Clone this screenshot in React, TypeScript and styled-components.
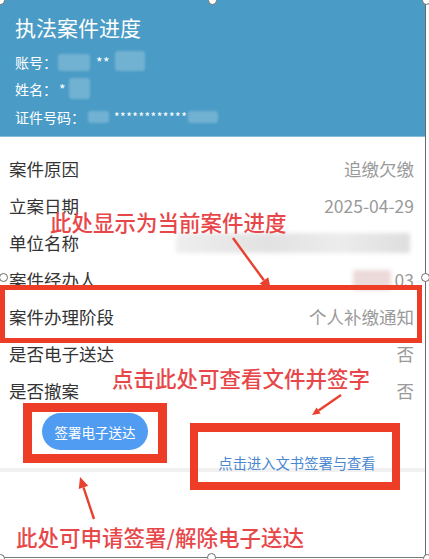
import React from "react";
import styled, { createGlobalStyle } from "styled-components";

//colors
const headerBlue = "#4a9cc6";
const markRed = "#ee3d26";
const noteRed = "#e8474a";

const GlobalStyle = createGlobalStyle`
  html, body {
    margin: 0;
    padding: 0;
    background: #ffffff;
  }
  body {
    font-family: "Noto Sans CJK SC", "Noto Sans", sans-serif;
  }
`;

//styled-components
const Canvas = styled.div`
  position: relative;
  width: 429px;
  height: 559px;
  overflow: hidden;
  background: #ffffff;
`;

const Frame = styled.div`
  width: 426px;
  height: 558px;
  box-sizing: border-box;
  border-right: 1px solid #6a6a6a;
  border-bottom: 1px solid #7a7a7a;
  display: flex;
  flex-direction: column;
`;

const Header = styled.header`
  height: 137px;
  box-sizing: border-box;
  padding: 12px 15px 0;
  background: ${headerBlue};
  border-bottom: 1px solid #86bcd8;
  color: #ffffff;
`;

const Title = styled.h1`
  margin: 0 0 6px;
  font-size: 21px;
  line-height: 30px;
  font-weight: 400;
`;

const InfoLine = styled.div`
  display: flex;
  align-items: center;
  height: 27.5px;
  font-size: 14px;
`;

const Mask = styled.span<{ $w: number; $h: number; $gap?: number; $dy?: number }>`
  display: inline-block;
  width: ${(p) => p.$w}px;
  height: ${(p) => p.$h}px;
  margin-left: ${(p) => p.$gap ?? 0}px;
  transform: translateY(${(p) => p.$dy ?? 0}px);
  background: rgba(255, 255, 255, 0.22);
  border-radius: 3px;
  filter: blur(1px);
`;

const Stars = styled.span<{ $gap?: number; $size?: number }>`
  margin-left: ${(p) => p.$gap ?? 0}px;
  font-size: ${(p) => p.$size ?? 12}px;
  letter-spacing: 0.5px;
`;

const List = styled.div`
  padding-top: 13px;
  display: flex;
  flex-direction: column;
`;

const Row = styled.div<{ $marked?: boolean }>`
  position: relative;
  height: 37px;
  padding: 0 11px 0 9px;
  display: flex;
  align-items: center;
  justify-content: space-between;
  font-size: 17.5px;

  ${(p) =>
    p.$marked &&
    `
    &::after {
      content: "";
      position: absolute;
      top: -13px;
      bottom: -8px;
      left: 0;
      right: 3px;
      border: 5px solid ${markRed};
      pointer-events: none;
    }
  `}
`;

const Label = styled.span`
  color: #333333;
`;

const Value = styled.span`
  display: flex;
  align-items: center;
  color: #9a9a9a;
`;

const GrayBlur = styled.span<{ $w: number; $tint?: string }>`
  display: inline-block;
  width: ${(p) => p.$w}px;
  height: 20px;
  margin-right: 4px;
  background: ${(p) => p.$tint ?? "linear-gradient(90deg, #eeeeee, #e2e2e2 40%, #ececec 70%, #dedede)"};
  filter: blur(2px);
`;

const ActionArea = styled.div`
  position: relative;
  margin-top: -6px;
  padding-left: 23px;
  display: flex;
  align-items: flex-start;

  &::before {
    content: "";
    position: absolute;
    left: 0;
    right: 0;
    top: 65px;
    height: 4px;
    background: #f1f1f1;
  }
`;

const ButtonBox = styled.div`
  position: relative;
  width: 144px;
  height: 60px;
  box-sizing: border-box;
  border: 9px solid ${markRed};
  display: flex;
  align-items: center;
  justify-content: center;
`;

const SignButton = styled.button`
  width: 106px;
  height: 37px;
  margin-top: -3px;
  border: none;
  border-radius: 19px;
  background: #4f9cf2;
  color: #ffffff;
  font-family: inherit;
  font-size: 13.5px;
  cursor: pointer;
`;

const LinkBox = styled.div`
  position: relative;
  width: 210px;
  height: 67px;
  margin: 20px 0 0 23px;
  box-sizing: border-box;
  border: 8px solid ${markRed};
  border-top-width: 9px;
  display: flex;
  align-items: flex-end;
  justify-content: center;
  padding: 0 0 9px 4px;
`;

const LinkText = styled.span`
  color: #4a88d2;
  font-size: 14.3px;
  line-height: 20px;
`;

const BottomNote = styled.div`
  margin-top: 34px;
  padding-left: 16px;
  color: ${noteRed};
  font-size: 21.5px;
  line-height: 26px;
  font-weight: 500;
`;

const FloatNote = styled.div<{ $x: number; $y: number }>`
  position: absolute;
  left: ${(p) => p.$x}px;
  top: ${(p) => p.$y}px;
  color: ${noteRed};
  font-size: 21.5px;
  line-height: 24px;
  font-weight: 500;
  white-space: nowrap;
`;

const ArrowLayer = styled.svg`
  position: absolute;
  left: 0;
  top: 0;
  pointer-events: none;
`;

const Handle = styled.span<{ $x: number; $y: number }>`
  position: absolute;
  left: ${(p) => p.$x - 4}px;
  top: ${(p) => p.$y - 4}px;
  width: 7px;
  height: 7px;
  border-radius: 50%;
  background: #ffffff;
  border: 1px solid #6c6c6c;
`;

const rows = [
  { label: "案件原因", value: "追缴欠缴" },
  { label: "立案日期", value: "2025-04-29" },
  { label: "单位名称", value: "unit" },
  { label: "案件经办人", value: "agent" },
  { label: "案件办理阶段", value: "个人补缴通知", marked: true },
  { label: "是否电子送达", value: "否" },
  { label: "是否撤案", value: "否" },
];

const handles = [
  [0, 0],
  [212, 0],
  [426, 0],
  [3, 277],
  [425, 277],
  [0, 558],
  [211, 557],
  [427, 558],
];

function RowValue({ value }: { value: string }) {
  if (value === "unit") {
    return (
      <Value>
        <GrayBlur $w={234} />
      </Value>
    );
  }
  if (value === "agent") {
    return (
      <Value>
        <GrayBlur $w={38} $tint="#ecd9d9" />
        03
      </Value>
    );
  }
  return <Value>{value}</Value>;
}

function Arrow({ x1, y1, x2, y2, head }: { x1: number; y1: number; x2: number; y2: number; head: number }) {
  const a = Math.atan2(y2 - y1, x2 - x1);
  const bx = x2 - Math.cos(a) * head;
  const by = y2 - Math.sin(a) * head;
  const w = head * 0.45;
  const px = Math.sin(a) * w;
  const py = -Math.cos(a) * w;
  return (
    <g>
      <line x1={x1} y1={y1} x2={bx} y2={by} stroke="#e8412f" strokeWidth={2.4} />
      <polygon points={`${x2},${y2} ${bx + px},${by + py} ${bx - px},${by - py}`} fill="#e8412f" />
    </g>
  );
}

export default function App() {
  return (
    <>
      <GlobalStyle />
      <Canvas>
        <Frame>
          {/*header */}
          <Header>
            <Title>执法案件进度</Title>
            <InfoLine>
              账号：
              <Mask $w={32} $h={17} $gap={1} $dy={1} />
              <Stars $gap={6} $size={14}>**</Stars>
              <Mask $w={30} $h={20} $gap={5} $dy={-1} />
            </InfoLine>
            <InfoLine>
              姓名：
              <Stars $gap={2} $size={14}>*</Stars>
              <Mask $w={21} $h={21} $gap={3} $dy={-1} />
            </InfoLine>
            <InfoLine>
              证件号码：
              <Mask $w={21} $h={12} $gap={3} />
              <Stars $gap={5}>************</Stars>
              <Mask $w={30} $h={12} $gap={1} />
            </InfoLine>
          </Header>

          {/*case rows */}
          <List>
            {rows.map((r) => (
              <Row key={r.label} $marked={r.marked}>
                <Label>{r.label}</Label>
                <RowValue value={r.value} />
              </Row>
            ))}
          </List>

          {/*actions */}
          <ActionArea>
            <ButtonBox>
              <SignButton>签署电子送达</SignButton>
            </ButtonBox>
            <LinkBox>
              <LinkText>点击进入文书签署与查看</LinkText>
            </LinkBox>
          </ActionArea>

          <BottomNote>此处可申请签署/解除电子送达</BottomNote>
        </Frame>

        {/*annotations */}
        <FloatNote $x={50} $y={210}>此处显示为当前案件进度</FloatNote>
        <FloatNote $x={112} $y={366}>点击此处可查看文件并签字</FloatNote>
        <ArrowLayer width={429} height={559}>
          <Arrow x1={233} y1={238} x2={271} y2={290} head={12} />
          <Arrow x1={341} y1={395} x2={312} y2={415} head={8} />
          <Arrow x1={94} y1={519} x2={80} y2={477} head={11} />
        </ArrowLayer>

        {handles.map(([x, y]) => (
          <Handle key={`${x}-${y}`} $x={x} $y={y} />
        ))}
      </Canvas>
    </>
  );
}
